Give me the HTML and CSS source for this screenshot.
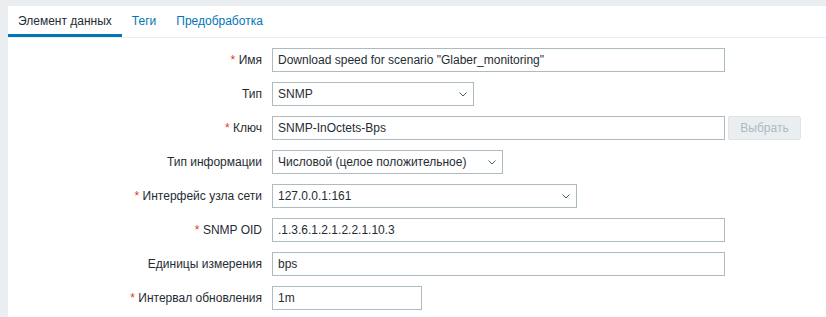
FILE: index.html
```html
<!DOCTYPE html>
<html lang="ru">
<head>
    <meta charset="UTF-8">
    <title>Элемент данных</title>
    <link rel="stylesheet" href="styles.css">
</head>
<body>
    <div class="page">
        <div class="container">
            <ul class="tabs">
                <li class="tab active">Элемент данных</li>
                <li class="tab">Теги</li>
                <li class="tab">Предобработка</li>
            </ul>

            <div class="form">
                <label class="required">Имя</label>
                <div class="field"><input class="input w-std" type="text" value='Download speed for scenario "Glaber_monitoring"'></div>

                <label>Тип</label>
                <div class="field">
                    <div class="select w-type"><span>SNMP</span><svg width="8" height="5" viewBox="0 0 8 5"><path d="M0.5 0.5 L4 4 L7.5 0.5" fill="none" stroke="#4f5b61" stroke-width="1"/></svg></div>
                </div>

                <label class="required">Ключ</label>
                <div class="field">
                    <input class="input w-std" type="text" value="SNMP-InOctets-Bps">
                    <button class="btn-disabled" type="button" disabled>Выбрать</button>
                </div>

                <label>Тип информации</label>
                <div class="field">
                    <div class="select w-info"><span>Числовой (целое положительное)</span><svg width="8" height="5" viewBox="0 0 8 5"><path d="M0.5 0.5 L4 4 L7.5 0.5" fill="none" stroke="#4f5b61" stroke-width="1"/></svg></div>
                </div>

                <label class="required">Интерфейс узла сети</label>
                <div class="field">
                    <div class="select w-iface"><span>127.0.0.1:161</span><svg width="8" height="5" viewBox="0 0 8 5"><path d="M0.5 0.5 L4 4 L7.5 0.5" fill="none" stroke="#4f5b61" stroke-width="1"/></svg></div>
                </div>

                <label class="required">SNMP OID</label>
                <div class="field"><input class="input w-std" type="text" value=".1.3.6.1.2.1.2.2.1.10.3"></div>

                <label>Единицы измерения</label>
                <div class="field"><input class="input w-std" type="text" value="bps"></div>

                <label class="required">Интервал обновления</label>
                <div class="field"><input class="input w-small" type="text" value="1m"></div>
            </div>
        </div>
    </div>
</body>
</html>
```

FILE: styles.css
```css
body {
    margin: 0;
    background-color: #ebeef0;
    font-family: 'Liberation Sans', Arial, sans-serif;
    font-size: 12px;
    color: #1f2c33;
}

.page {
    padding: 6px 0 0 8px;
}

.container {
    background: #fff;
    height: 320px;
}

/* Вкладки */
.tabs {
    list-style: none;
    margin: 0;
    padding: 0;
    display: flex;
    height: 31px;
    border-bottom: 1px solid #ebeef0;
}

.tab {
    padding: 0 10px;
    line-height: 31px;
    color: #0275b8;
    box-sizing: border-box;
    height: 31px;
}

.tab.active {
    color: #1f2c33;
    border-bottom: 3px solid #0275b8;
    line-height: 31px;
}

/* Форма */
.form {
    display: grid;
    grid-template-columns: 254px 1fr;
    column-gap: 10px;
    row-gap: 10px;
    padding-top: 10px;
}

.form label {
    text-align: right;
    line-height: 24px;
    height: 24px;
}

.form label.required::before {
    content: "* ";
    color: #e33734;
}

.field {
    display: flex;
    align-items: center;
    gap: 3px;
    height: 24px;
}

.input,
.select {
    height: 24px;
    box-sizing: border-box;
    border: 1px solid #acbbc2;
    background: #fff;
    font-family: inherit;
    font-size: 12px;
    color: #1f2c33;
    padding: 0 5px;
    margin: 0;
    outline: none;
}

.select {
    display: flex;
    align-items: center;
    justify-content: space-between;
    padding: 0 6px 0 5px;
}

.w-std { width: 453px; }
.w-small { width: 150px; }
.w-type { width: 202px; }
.w-info { width: 231px; }
.w-iface { width: 305px; }

.btn-disabled {
    height: 24px;
    width: 73px;
    box-sizing: border-box;
    background-color: #ebeef0;
    border: 1px solid #dfe4e7;
    border-radius: 2px;
    color: #acbbc2;
    font-family: inherit;
    font-size: 12px;
    padding: 0 10px;
    margin: 0;
}
```
